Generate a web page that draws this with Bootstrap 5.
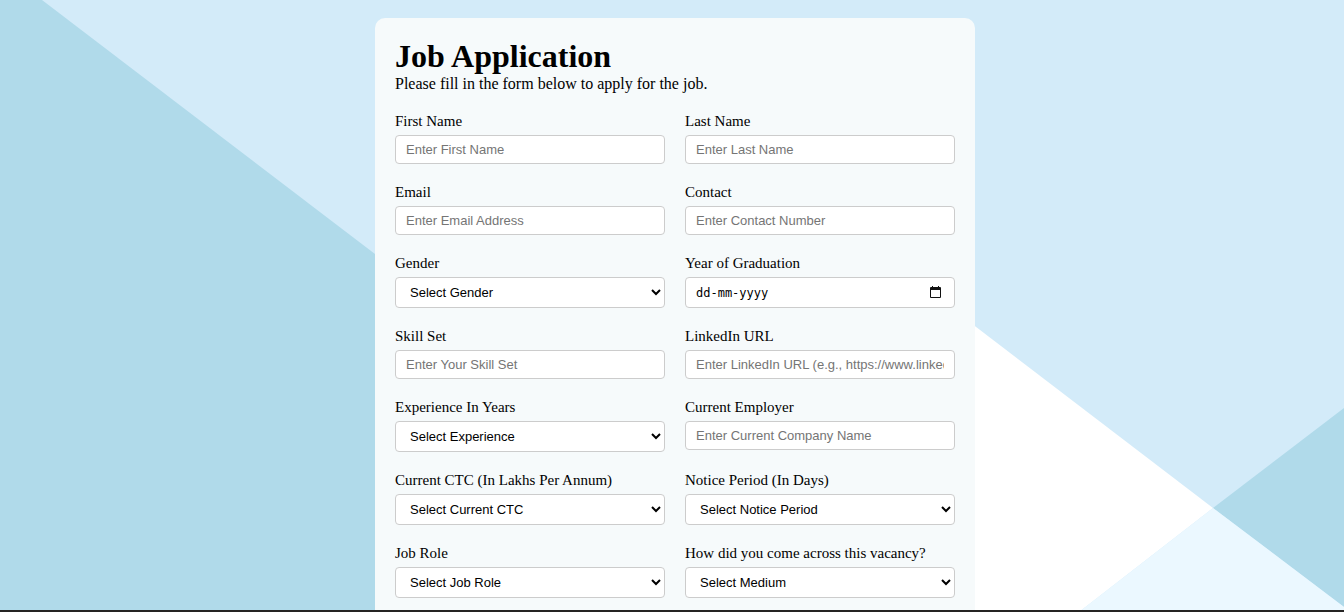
<!DOCTYPE html>
<html lang="en">
<head>
<meta charset="utf-8">
<meta name="viewport" content="width=device-width, initial-scale=1">
<title>Job Application</title>
<link href="https://cdn.jsdelivr.net/npm/bootstrap@5.3.0/dist/css/bootstrap.min.css" rel="stylesheet">
<style>
  body { font-family: "Liberation Serif", "Times New Roman", serif; color: #000; background: #d3ebf9; }
  .backdrop { z-index: -1; }
  .scroll-area { min-height: 0; padding: 18px 12px 0 18px; }
  .scroll-area::-webkit-scrollbar { display: none; }
  .application { max-width: 600px; padding: 20px 20px 40px; background: #f6fafb; border-radius: 10px; }
  .application h1 { font-size: 32px; line-height: 37px; font-weight: 700; margin: 0; }
  .application p { font-size: 16px; line-height: 18px; margin: 0 0 20px; }
  .application .row { --bs-gutter-x: 20px; --bs-gutter-y: 20px; }
  .application label { display: block; font-size: 15px; line-height: 17px; margin-bottom: 5px; }
  .application .field { display: block; width: 100%; height: 29px; padding: 6px 10px; font: 13px "Liberation Sans", Arial, sans-serif; color: #000; background-color: #fff; border: 1px solid #ccc; border-radius: 4px; }
  .application .field::placeholder { color: #757575; opacity: 1; }
  .application select.field, .application .date-field { height: 31px; }
  .application .date-field { font-family: "DejaVu Sans Mono", monospace; font-size: 12px; }
  .application .date-field::placeholder { color: #000; }
  .picker { right: 12px; width: 14px; height: 14px; padding: 0; border: 0; background: none; line-height: 0; }
  .status-strip { height: 2px; background: #252423; }
</style>
</head>
<body class="vh-100 d-flex flex-column overflow-hidden">
<svg class="backdrop position-fixed top-0 start-0 w-100 h-100" viewBox="0 0 1344 612" preserveAspectRatio="none" aria-hidden="true">
  <path fill="#d3ebf9" d="M0 0H1344V612H0z"/>
  <path fill="#b0daea" d="M0 0H42L510 357V612H0z"/>
  <path fill="#fff" d="M700 612V116L1213 508 1079 612z"/>
  <path fill="#b0daea" d="M1344 408L1213 508 1344 607z"/>
  <path fill="#ebf8ff" d="M1213 508L1079 612H1344V607z"/>
</svg>
<main class="scroll-area flex-fill overflow-auto">
  <form class="application mx-auto">
    <h1>Job Application</h1>
    <p>Please fill in the form below to apply for the job.</p>
    <div class="row row-cols-2">
      <div class="col"><label for="first">First Name</label><input class="field" id="first" type="text" placeholder="Enter First Name"></div>
      <div class="col"><label for="last">Last Name</label><input class="field" id="last" type="text" placeholder="Enter Last Name"></div>
      <div class="col"><label for="email">Email</label><input class="field" id="email" type="email" placeholder="Enter Email Address"></div>
      <div class="col"><label for="contact">Contact</label><input class="field" id="contact" type="tel" placeholder="Enter Contact Number"></div>
      <div class="col"><label for="gender">Gender</label><select class="field" id="gender"><option>Select Gender</option></select></div>
      <div class="col"><label for="graduation">Year of Graduation</label>
        <div class="position-relative">
          <input class="field date-field" id="graduation" type="text" placeholder="dd-mm-yyyy">
          <button class="picker position-absolute top-50 translate-middle-y" type="button" aria-label="Choose date"><svg width="14" height="14" viewBox="0 0 14 14"><path fill="#111" fill-rule="evenodd" d="M1 2Q1 1 2 1H3V0H4V1H9V0H10V1H11Q12 1 12 2V11Q12 12 11 12H2Q1 12 1 11zM2 4V11H11V4z"/></svg></button>
        </div>
      </div>
      <div class="col"><label for="skills">Skill Set</label><input class="field" id="skills" type="text" placeholder="Enter Your Skill Set"></div>
      <div class="col"><label for="linkedin">LinkedIn URL</label><input class="field" id="linkedin" type="url" placeholder="Enter LinkedIn URL (e.g., https://www.linkedin.com)"></div>
      <div class="col"><label for="experience">Experience In Years</label><select class="field" id="experience"><option>Select Experience</option></select></div>
      <div class="col"><label for="employer">Current Employer</label><input class="field" id="employer" type="text" placeholder="Enter Current Company Name"></div>
      <div class="col"><label for="ctc">Current CTC (In Lakhs Per Annum)</label><select class="field" id="ctc"><option>Select Current CTC</option></select></div>
      <div class="col"><label for="notice">Notice Period (In Days)</label><select class="field" id="notice"><option>Select Notice Period</option></select></div>
      <div class="col"><label for="role">Job Role</label><select class="field" id="role"><option>Select Job Role</option></select></div>
      <div class="col"><label for="medium">How did you come across this vacancy?</label><select class="field" id="medium"><option>Select Medium</option></select></div>
    </div>
  </form>
</main>
<div class="status-strip flex-shrink-0"></div>
<script src="https://cdn.jsdelivr.net/npm/bootstrap@5.3.0/dist/js/bootstrap.bundle.min.js"></script>
</body>
</html>
